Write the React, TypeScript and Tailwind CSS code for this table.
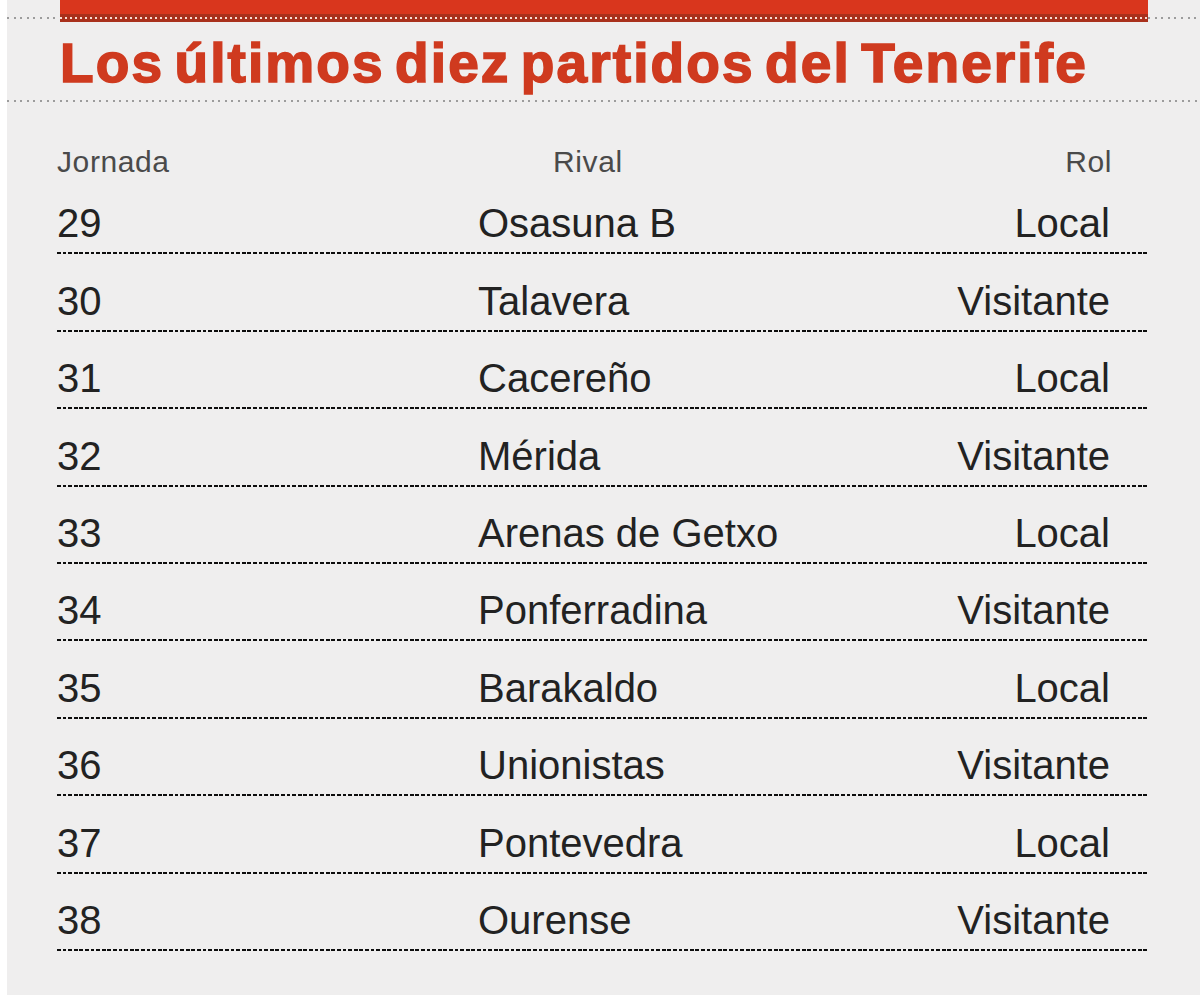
import React from "react";

const rows: [string, string, string][] = [
  ["29", "Osasuna B", "Local"],
  ["30", "Talavera", "Visitante"],
  ["31", "Cacereño", "Local"],
  ["32", "Mérida", "Visitante"],
  ["33", "Arenas de Getxo", "Local"],
  ["34", "Ponferradina", "Visitante"],
  ["35", "Barakaldo", "Local"],
  ["36", "Unionistas", "Visitante"],
  ["37", "Pontevedra", "Local"],
  ["38", "Ourense", "Visitante"],
];

function GreyDots() {
  return (
    <div className="h-[2px] w-full bg-[repeating-linear-gradient(90deg,#9c9c9c_0_2px,transparent_2px_6.6px)]" />
  );
}

export default function App() {
  return (
    <div className="w-[1200px] h-[996px] bg-white flex font-['Liberation_Sans',Arial,sans-serif]">
      <div className="ml-[7px] flex-1 h-[995px] bg-[#efeeee] flex flex-col">
        {/* top red bar */}
        <div className="flex h-[22px]">
          <div className="w-[53px] pt-[17px]">
            <GreyDots />
          </div>
          <div className="w-[1088px] flex flex-col">
            <div className="h-[14px] bg-[#d9361d]" />
            <div className="h-[8px] bg-[#a9301c] flex items-center">
              <div className="h-[2px] w-full bg-[repeating-linear-gradient(90deg,#f6dcd4_0_2px,transparent_2px_5px)]" />
            </div>
          </div>
          <div className="flex-1 pt-[17px]">
            <GreyDots />
          </div>
        </div>

        {/* title */}
        <h1 className="mt-[14px] pl-[53px] text-[55px] leading-[55px] font-bold text-[#cf3a1f] tracking-[2.1px] [word-spacing:-7px] [-webkit-text-stroke:1.6px_#cf3a1f] whitespace-nowrap">
          Los últimos diez partidos del Tenerife
        </h1>

        <div className="mt-[9px]">
          <GreyDots />
        </div>

        {/* table */}
        <div className="pl-[50px] w-[1141px] mt-[45px]">
          <div className="grid grid-cols-[421px_1fr_auto] pr-[36px] text-[30px] leading-[30px] text-[#4a4a4a] tracking-[0.6px]">
            <span>Jornada</span>
            <span className="pl-[75px]">Rival</span>
            <span className="text-right">Rol</span>
          </div>
          {rows.map(([j, r, rol]) => (
            <div key={j} className="pt-[26.4px]">
              <div className="grid grid-cols-[421px_1fr_auto] pr-[38px] text-[40px] leading-[40px] text-[#222]">
                <span>{j}</span>
                <span>{r}</span>
                <span className="text-right">{rol}</span>
              </div>
              <div className="mt-[9px] h-[2px] w-full bg-[repeating-linear-gradient(90deg,#0d0d0d_0_3.8px,transparent_3.8px_5.6px)]" />
            </div>
          ))}
        </div>
      </div>
    </div>
  );
}
